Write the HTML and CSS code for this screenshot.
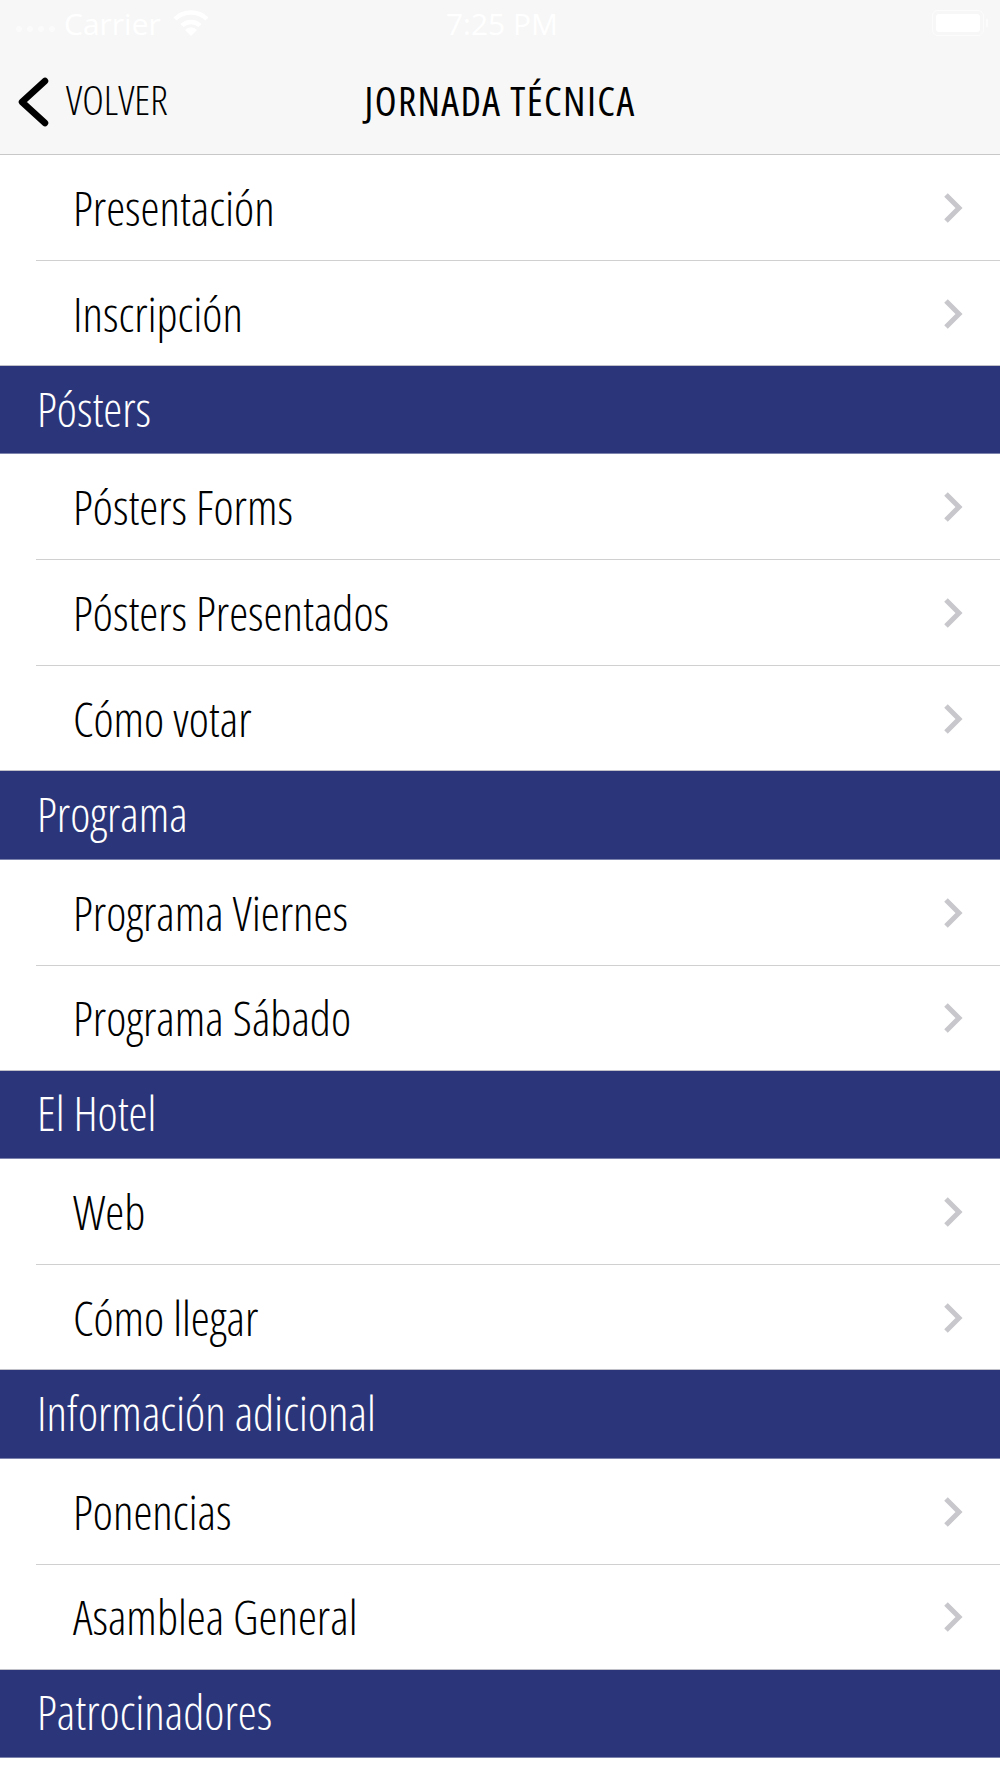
FILE: index.html
```html
<!DOCTYPE html>
<html lang="es">
<head>
  <meta charset="UTF-8">
  <title>Jornada Técnica</title>
  <link rel="stylesheet" href="styles.css">
</head>
<body>
  <svg class="defs" width="0" height="0">
    <symbol id="chev" viewBox="0 0 22 32">
      <path d="M3 3L16 16L3 29" fill="none" stroke="#c7c7cc" stroke-width="5"/>
    </symbol>
  </svg>

  <header class="top">
    <div class="status">
      <div class="status-left">
        <span class="dots"><i></i><i></i><i></i><i></i></span>
        <span>Carrier</span>
        <svg class="wifi" width="36" height="26" viewBox="0 0 36 26">
          <path d="M2 9a23 23 0 0 1 32 0" fill="none" stroke="#fff" stroke-width="4.500"/>
          <path d="M9 15.500a13 13 0 0 1 18 0" fill="none" stroke="#fff" stroke-width="4.500"/>
          <path d="M18 26l-6-6a8 8 0 0 1 12 0z" fill="#fff"/>
        </svg>
      </div>
      <span class="clock">7:25 PM</span>
      <div class="status-right">
        <span class="battery"><i></i></span>
        <span class="nub"></span>
      </div>
    </div>
    <nav class="nav">
      <a class="back">
        <svg width="34" height="50" viewBox="0 0 34 50">
          <path d="M30 4L7 25l23 21" fill="none" stroke="#000" stroke-width="6.500" stroke-linecap="round" stroke-linejoin="round"/>
        </svg>
        <span class="back-label">VOLVER</span>
      </a>
      <h1>JORNADA TÉCNICA</h1>
    </nav>
  </header>

  <ul class="list">
    <li class="row"><span>Presentación</span><svg class="chev"><use href="#chev"/></svg></li>
    <li class="row"><span>Inscripción</span><svg class="chev"><use href="#chev"/></svg></li>
    <li class="section">Pósters</li>
    <li class="row"><span>Pósters Forms</span><svg class="chev"><use href="#chev"/></svg></li>
    <li class="row"><span>Pósters Presentados</span><svg class="chev"><use href="#chev"/></svg></li>
    <li class="row"><span>Cómo votar</span><svg class="chev"><use href="#chev"/></svg></li>
    <li class="section">Programa</li>
    <li class="row"><span>Programa Viernes</span><svg class="chev"><use href="#chev"/></svg></li>
    <li class="row"><span>Programa Sábado</span><svg class="chev"><use href="#chev"/></svg></li>
    <li class="section">El Hotel</li>
    <li class="row"><span>Web</span><svg class="chev"><use href="#chev"/></svg></li>
    <li class="row"><span>Cómo llegar</span><svg class="chev"><use href="#chev"/></svg></li>
    <li class="section">Información adicional</li>
    <li class="row"><span>Ponencias</span><svg class="chev"><use href="#chev"/></svg></li>
    <li class="row"><span>Asamblea General</span><svg class="chev"><use href="#chev"/></svg></li>
    <li class="section">Patrocinadores</li>
  </ul>
</body>
</html>
```

FILE: styles.css
```css
* {
  box-sizing: border-box;
}
html, body {
  margin: 0;
  height: 1778px;
  overflow: hidden;
  background: #fff;
}
body {
  font-family: "Open Sans", "Liberation Sans", sans-serif;
  font-stretch: 75%;
  font-weight: 300;
  color: #000;
}
.defs {
  position: absolute;
}
.top {
  height: 155px;
  background: #f7f7f7;
  border-bottom: 1px solid #c8c8c8;
}
.status {
  height: 46px;
  padding: 0 12px 0 16px;
  display: flex;
  align-items: center;
  justify-content: space-between;
  color: #fff;
  font-size: 30px;
  font-stretch: 100%;
  font-weight: 400;
}
.status-left,
.status-right {
  width: 300px;
  display: flex;
  align-items: center;
}
.status-left {
  gap: 9px;
}
.wifi {
  margin-left: 3px;
}
.status-right {
  justify-content: flex-end;
  gap: 2px;
}
.dots {
  display: flex;
  gap: 5px;
  margin-top: 12px;
  opacity: 0.5;
}
.dots i {
  width: 6px;
  height: 6px;
  border-radius: 50%;
  background: #fff;
}
.battery {
  width: 52px;
  height: 26px;
  padding: 3px;
  border: 1px solid rgba(255, 255, 255, 0.6);
  border-radius: 6px;
  display: flex;
}
.battery i {
  width: 100%;
  background: #fff;
  border-radius: 3px;
}
.nub {
  width: 2px;
  height: 8px;
  background: rgba(255, 255, 255, 0.6);
}
.nav {
  height: 108px;
  position: relative;
  display: flex;
  align-items: center;
  justify-content: center;
}
.back {
  position: absolute;
  left: 15px;
  top: 25px;
  display: flex;
  align-items: center;
  gap: 17px;
  font-size: 41px;
}
.back-label {
  margin-bottom: 5px;
}
.nav h1 {
  margin: 0;
  font-size: 40px;
  font-weight: 400;
  letter-spacing: 1.4px;
}
.list {
  list-style: none;
  margin: 0;
  padding: 0;
}
.row {
  height: 106px;
  margin-left: 36px;
  padding: 0 35px 0 37px;
  display: flex;
  align-items: center;
  justify-content: space-between;
  font-size: 48px;
  border-bottom: 1px solid #d0d0d0;
}
.row:has(+ .section) {
  height: 104px;
  border-bottom: none;
}
.chev {
  width: 22px;
  height: 32px;
  margin-top: 1px;
}
.section {
  height: 89.4px;
  padding: 0 0 3px 37px;
  display: flex;
  align-items: center;
  background: #2b367a;
  border-top: 1px solid #c0c0c8;
  border-bottom: 1px solid #7c83ad;
  color: #fff;
  font-size: 48px;
}
```
